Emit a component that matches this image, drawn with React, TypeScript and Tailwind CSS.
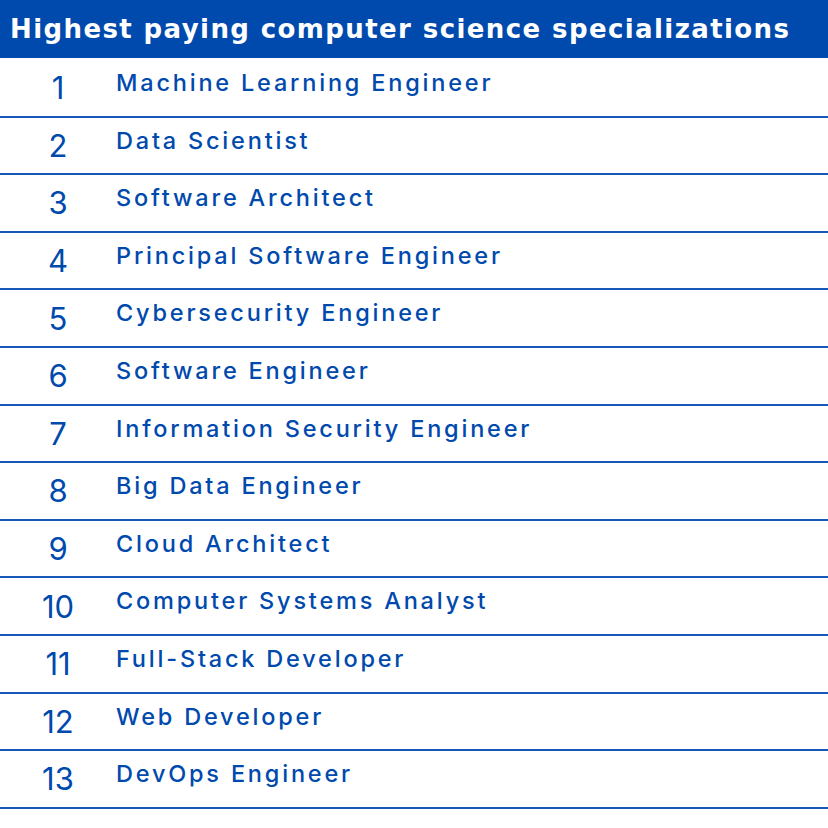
const jobs = [
  'Machine Learning Engineer',
  'Data Scientist',
  'Software Architect',
  'Principal Software Engineer',
  'Cybersecurity Engineer',
  'Software Engineer',
  'Information Security Engineer',
  'Big Data Engineer',
  'Cloud Architect',
  'Computer Systems Analyst',
  'Full-Stack Developer',
  'Web Developer',
  'DevOps Engineer',
];

export default function App() {
  return (
    <div className="w-[828px] h-[828px] bg-white font-['Inter','Liberation_Sans',sans-serif] text-[#0049ad]">
      {/* Title bar */}
      <div className="h-[58px] bg-[#004aad] flex items-center pl-[10px]">
        <h1 className="text-white text-[26px] font-bold tracking-[1.4px] leading-none font-['DejaVu_Sans',sans-serif]">
          Highest paying computer science specializations
        </h1>
      </div>

      {/* Ranking rows */}
      <div className="flex flex-col pt-[2px]">
        {jobs.map((job, i) => (
          <div key={job} className="h-[57.6px] flex items-center border-b-2 border-[#1757b8]">
            <span className="w-[116px] text-center text-[31px] font-normal leading-none">{i + 1}</span>
            <span className="text-[23.5px] font-medium tracking-[2.8px] leading-none mb-[10px]">{job}</span>
          </div>
        ))}
      </div>
    </div>
  );
}
